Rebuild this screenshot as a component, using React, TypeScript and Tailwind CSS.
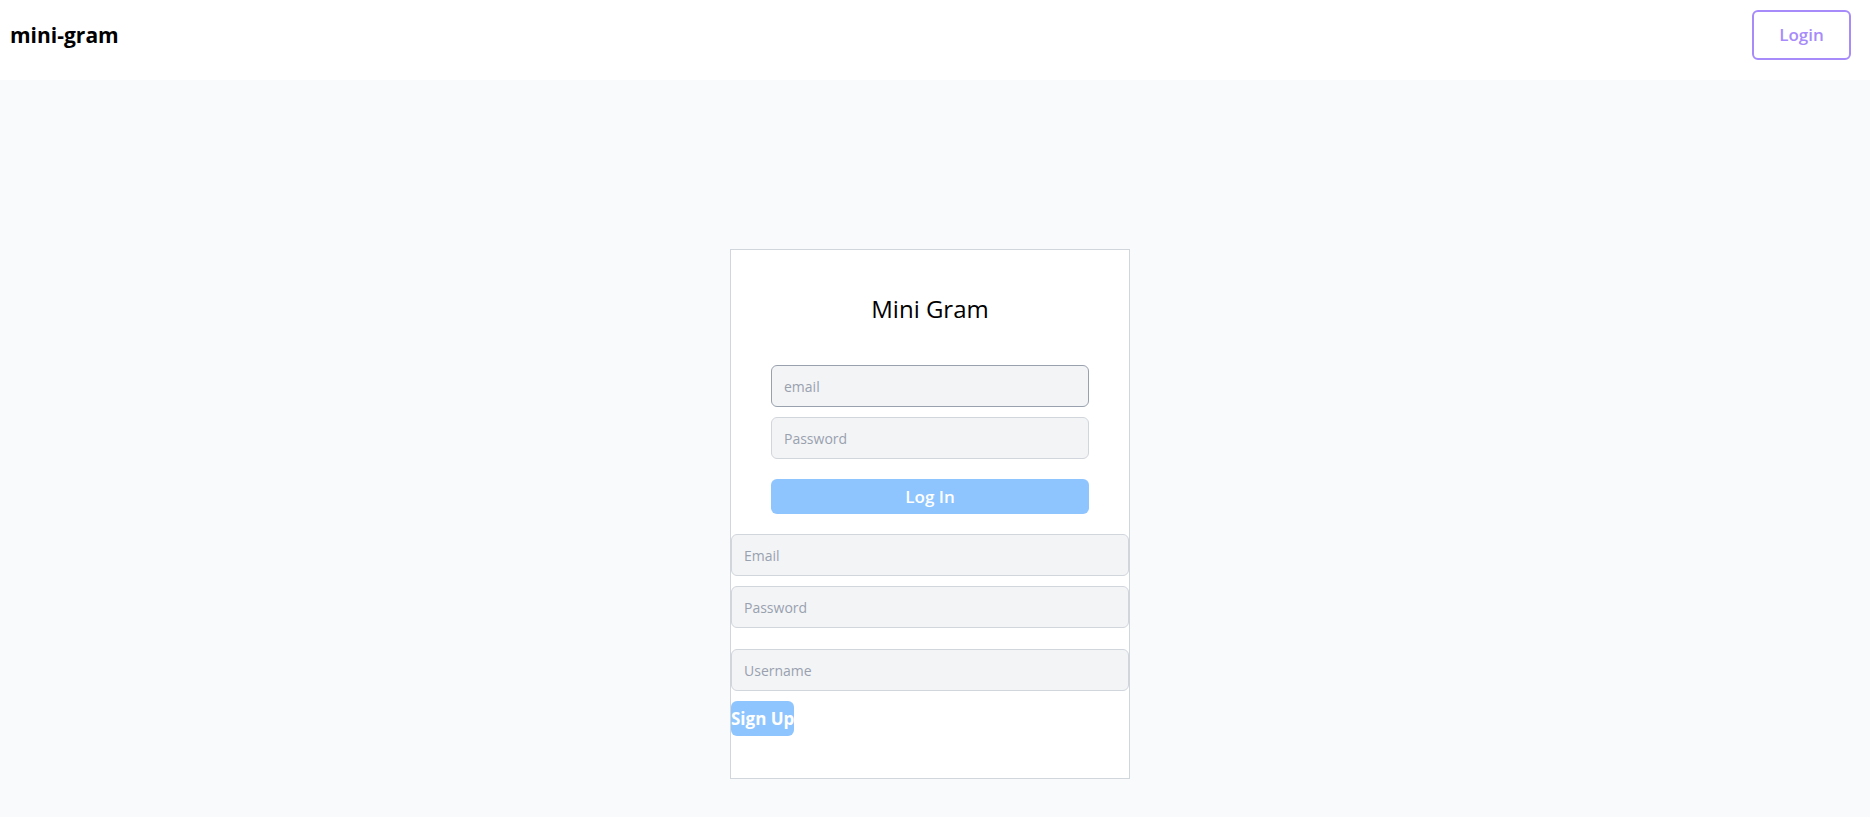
import React from "react";

export default function App() {
  return (
    <div className="min-h-screen bg-gray-50 text-black" style={{ fontFamily: '"Open Sans", "Noto Sans", sans-serif' }}>
      <header className="h-20 bg-white flex items-start justify-between pl-[10px] pr-[19px]">
        <h1 className="text-[21px] font-bold leading-none mt-[25px]">mini-gram</h1>
        <button className="mt-[10px] w-[99px] h-[50px] border-2 border-[#a78bfa] rounded-md text-[#a78bfa] text-[17px] font-semibold bg-white">
          Login
        </button>
      </header>
      <main className="flex justify-center pr-[10px] pt-[169px] pb-[39px]">
        <div className="w-[400px] h-[530px] bg-white border border-gray-300 flex flex-col">
          <div className="px-10 flex flex-col items-center">
            <h2 className="text-[24px] leading-8 font-normal mt-[43px]">Mini Gram</h2>
            <form className="w-full flex flex-col gap-[10px] mt-[40px]" onSubmit={(e) => e.preventDefault()}>
              <input
                placeholder="email"
                className="h-[42px] w-full rounded-md border border-gray-400 bg-gray-100 px-3 text-sm placeholder:text-gray-400 outline-none"
              />
              <input
                type="password"
                placeholder="Password"
                className="h-[42px] w-full rounded-md border border-gray-300 bg-gray-100 px-3 text-sm placeholder:text-gray-400 outline-none"
              />
              <button className="mt-[10px] h-[35px] w-full rounded-md bg-blue-300 text-white font-semibold text-[17px]">
                Log In
              </button>
            </form>
          </div>
          <form className="flex flex-col mt-[20px]" onSubmit={(e) => e.preventDefault()}>
            <input
              placeholder="Email"
              className="h-[42px] w-full rounded-md border border-gray-300 bg-gray-100 px-3 text-sm placeholder:text-gray-400 outline-none"
            />
            <input
              type="password"
              placeholder="Password"
              className="mt-[10px] h-[42px] w-full rounded-md border border-gray-300 bg-gray-100 px-3 text-sm placeholder:text-gray-400 outline-none"
            />
            <input
              placeholder="Username"
              className="mt-[21px] h-[42px] w-full rounded-md border border-gray-300 bg-gray-100 px-3 text-sm placeholder:text-gray-400 outline-none"
            />
            <div className="mt-[10px]">
              <button className="h-[35px] px-0 rounded-md bg-blue-300 text-white font-bold text-[17px] leading-none">
                Sign Up
              </button>
            </div>
          </form>
        </div>
      </main>
    </div>
  );
}
